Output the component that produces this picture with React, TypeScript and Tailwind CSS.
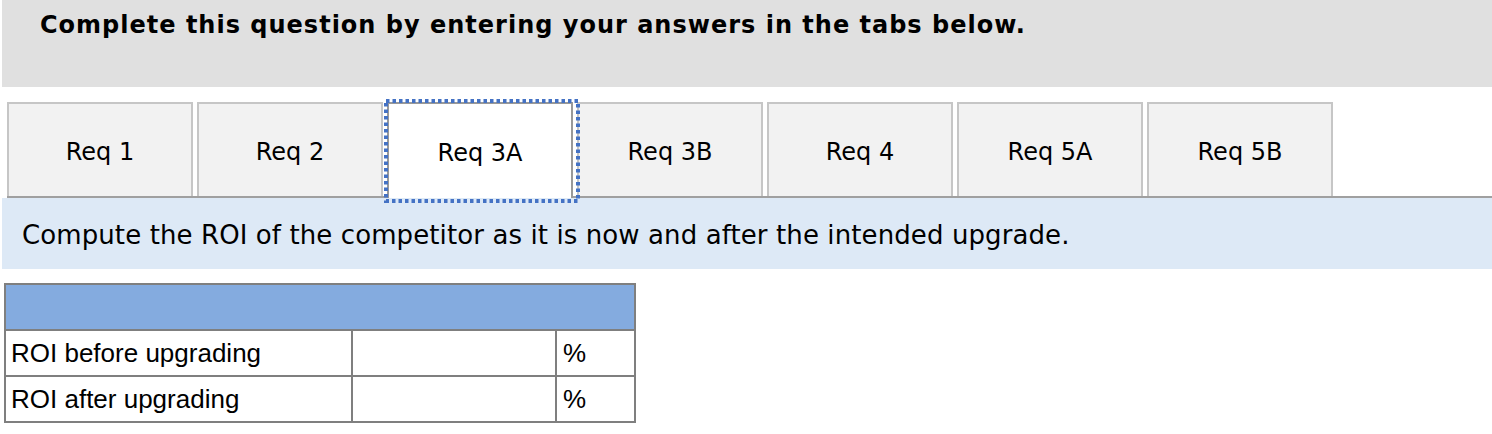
import React from 'react';

const tabs = ['Req 1', 'Req 2', 'Req 3A', 'Req 3B', 'Req 4', 'Req 5A', 'Req 5B'];
const activeTab = 'Req 3A';

const rows = [
  { label: 'ROI before upgrading', unit: '%' },
  { label: 'ROI after upgrading', unit: '%' },
];

// dotted focus ring around the selected tab
const FocusRing = () => (
  <svg className="pointer-events-none absolute -top-[5px] -left-[5px] h-[104px] w-[196px]" viewBox="0 0 196 104">
    <rect x="2" y="2" width="192" height="100" fill="none" stroke="#4472c4" strokeWidth="4" strokeDasharray="3.5 3" />
  </svg>
);

export default function App() {
  return (
    <div className="min-h-screen w-[1492px] bg-white">
      {/* instructions banner */}
      <div className="ml-[2px] h-[87px] bg-[#e0e0e0] pl-[38px] pt-[9px]">
        <h2 className="font-['DejaVu_Sans',Verdana,sans-serif] text-[24px] font-bold leading-[32px] tracking-[1px] text-black">
          Complete this question by entering your answers in the tabs below.
        </h2>
      </div>

      {/* tab strip */}
      <div className="mt-[15px] ml-[7px] flex gap-[4px] border-b-2 border-[#a0a0a0]">
        {tabs.map((t) => {
          const active = t === activeTab;
          return (
            <div
              key={t}
              className={
                active
                  ? "relative z-10 -mb-[2px] flex h-[96px] w-[186px] items-center justify-center border-2 border-b-0 border-[#999999] bg-white pt-[3px] font-['DejaVu_Sans',Verdana,sans-serif] text-[24px] text-black"
                  : "flex h-[94px] w-[186px] items-center justify-center border-2 border-b-0 border-[#c6c6c6] bg-[#f2f2f2] pt-[3px] font-['DejaVu_Sans',Verdana,sans-serif] text-[24px] text-black"
              }
            >
              {t}
              {active && <FocusRing />}
            </div>
          );
        })}
      </div>

      <div className="ml-[2px] flex h-[71px] items-center bg-[#dde9f6] pt-[3px] pl-[20px] font-['DejaVu_Sans',Verdana,sans-serif] text-[26px] tracking-[0.1px] text-black">
        Compute the ROI of the competitor as it is now and after the intended upgrade.
      </div>

      {/* answer table */}
      <table className="mt-[14px] ml-[4px] w-[632px] border-collapse border-2 border-[#7f7f7f] font-['Liberation_Sans',Arial,sans-serif] text-[26px] text-black">
        <thead>
          <tr>
            <th colSpan={3} className="h-[46px] border-2 border-[#7f7f7f] bg-[#84abdf]" />
          </tr>
        </thead>
        <tbody>
          {rows.map((r) => (
            <tr key={r.label}>
              <td className="h-[46px] w-[347px] border-2 border-[#7f7f7f] px-[5px] leading-none">{r.label}</td>
              <td className="w-[204px] border-2 border-[#7f7f7f]" />
              <td className="border-2 border-[#7f7f7f] px-[6px] leading-none">{r.unit}</td>
            </tr>
          ))}
        </tbody>
      </table>
    </div>
  );
}
